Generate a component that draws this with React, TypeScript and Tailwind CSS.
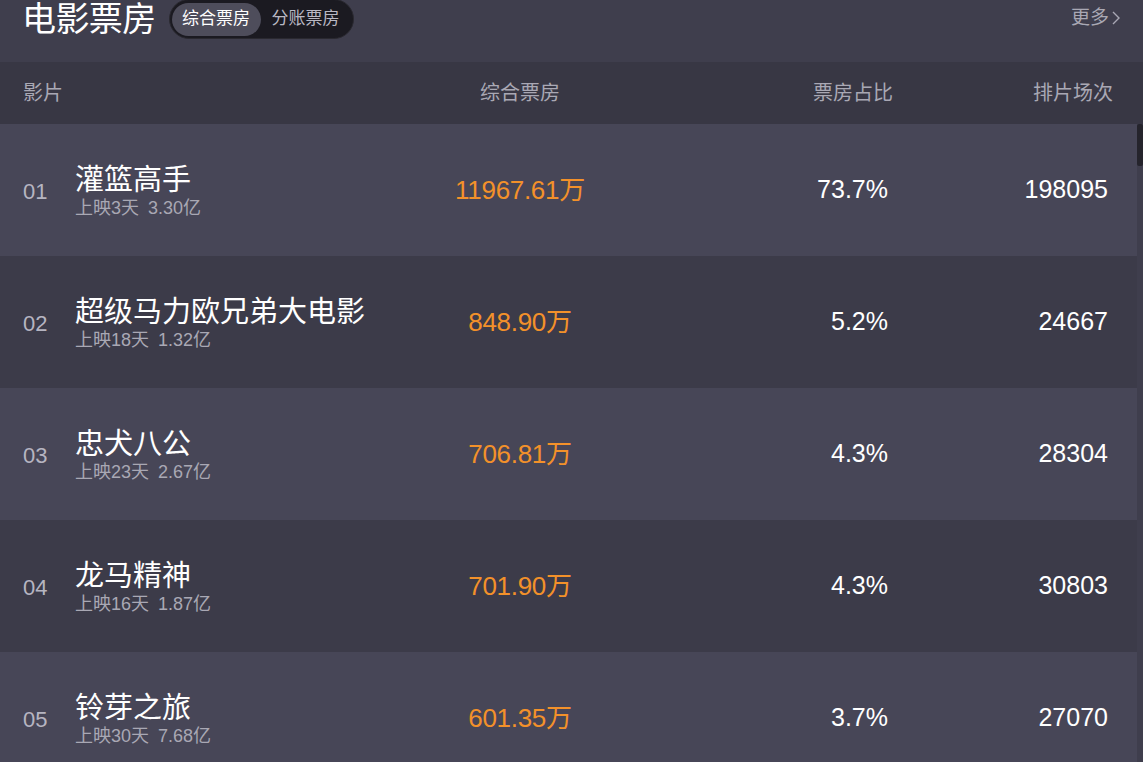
import React from "react";

const rows = [
  { rank: "01", name: "灌篮高手", days: "上映3天", total: "3.30亿", box: "11967.61万", pct: "73.7%", shows: "198095" },
  { rank: "02", name: "超级马力欧兄弟大电影", days: "上映18天", total: "1.32亿", box: "848.90万", pct: "5.2%", shows: "24667" },
  { rank: "03", name: "忠犬八公", days: "上映23天", total: "2.67亿", box: "706.81万", pct: "4.3%", shows: "28304" },
  { rank: "04", name: "龙马精神", days: "上映16天", total: "1.87亿", box: "701.90万", pct: "4.3%", shows: "30803" },
  { rank: "05", name: "铃芽之旅", days: "上映30天", total: "7.68亿", box: "601.35万", pct: "3.7%", shows: "27070" },
];

const font = { fontFamily: '"Liberation Sans", "Noto Sans CJK SC", Arial, sans-serif' };

export default function App() {
  return (
    <div className="w-[1143px] h-[762px] overflow-hidden bg-[#3f3e4d] flex flex-col" style={font}>
      <div className="h-[62px] shrink-0 flex items-start pl-[22px] pr-[22px]">
        <div className="text-[34px] leading-[38px] text-white tracking-[-0.6px]">电影票房</div>
        <div className="ml-[13px] mt-[-1px] h-[40px] w-[185px] rounded-full bg-[#1b1a21] border border-[#2a2930] flex items-center px-[2px]">
          <div className="h-[33px] w-[89px] rounded-full bg-[#4e4d5b] text-white text-[17px] flex items-center justify-center">综合票房</div>
          <div className="flex-1 text-[#b9b8c3] text-[17px] flex items-center justify-center">分账票房</div>
        </div>
        <div className="ml-auto mt-[6px] flex items-center text-[#a9a8b4] text-[19px] leading-[24px]">
          更多
          <svg width="10" height="16" viewBox="0 0 10 16" className="ml-[2px]">
            <path d="M2 2 L8 8 L2 14" fill="none" stroke="#a9a8b4" strokeWidth="1.4" />
          </svg>
        </div>
      </div>
      <div className="h-[62px] shrink-0 bg-[#383744] flex items-center pl-[23px] text-[20px] text-[#a9a8b4]">
        <div className="w-[382px]">影片</div>
        <div className="w-[230px] text-center">综合票房</div>
        <div className="w-[258px] text-right">票房占比</div>
        <div className="w-[220px] text-right">排片场次</div>
      </div>
      <div className="flex flex-1 min-h-0">
        <div className="flex-1 flex flex-col">
          {rows.map((r, i) => (
            <div
              key={r.rank}
              className={`h-[132px] shrink-0 flex items-center pl-[23px] ${i % 2 === 0 ? "bg-[#474657]" : "bg-[#3c3b49]"}`}
            >
              <div className="w-[52px] text-[22px] text-[#b6b5c1] pt-[2px]">{r.rank}</div>
              <div className="w-[330px] flex flex-col pt-[2px]">
                <div className="text-[29px] leading-[34px] text-white">{r.name}</div>
                <div className="text-[18px] leading-[23px] text-[#a9a8b4]">
                  {r.days}
                  <span className="ml-[9px]">{r.total}</span>
                </div>
              </div>
              <div className="w-[230px] text-center text-[26px] text-[#f3912a] tracking-[-0.3px]">{r.box}</div>
              <div className="w-[258px] text-right pr-[5px] text-[25px] text-white">{r.pct}</div>
              <div className="w-[220px] text-right pr-[5px] text-[25px] text-white">{r.shows}</div>
            </div>
          ))}
        </div>
        <div className="w-[6px] shrink-0 bg-[#3f3e4d] flex flex-col">
          <div className="h-[42px] w-[6px] rounded-[2px] bg-[#25242c]" />
        </div>
      </div>
    </div>
  );
}
